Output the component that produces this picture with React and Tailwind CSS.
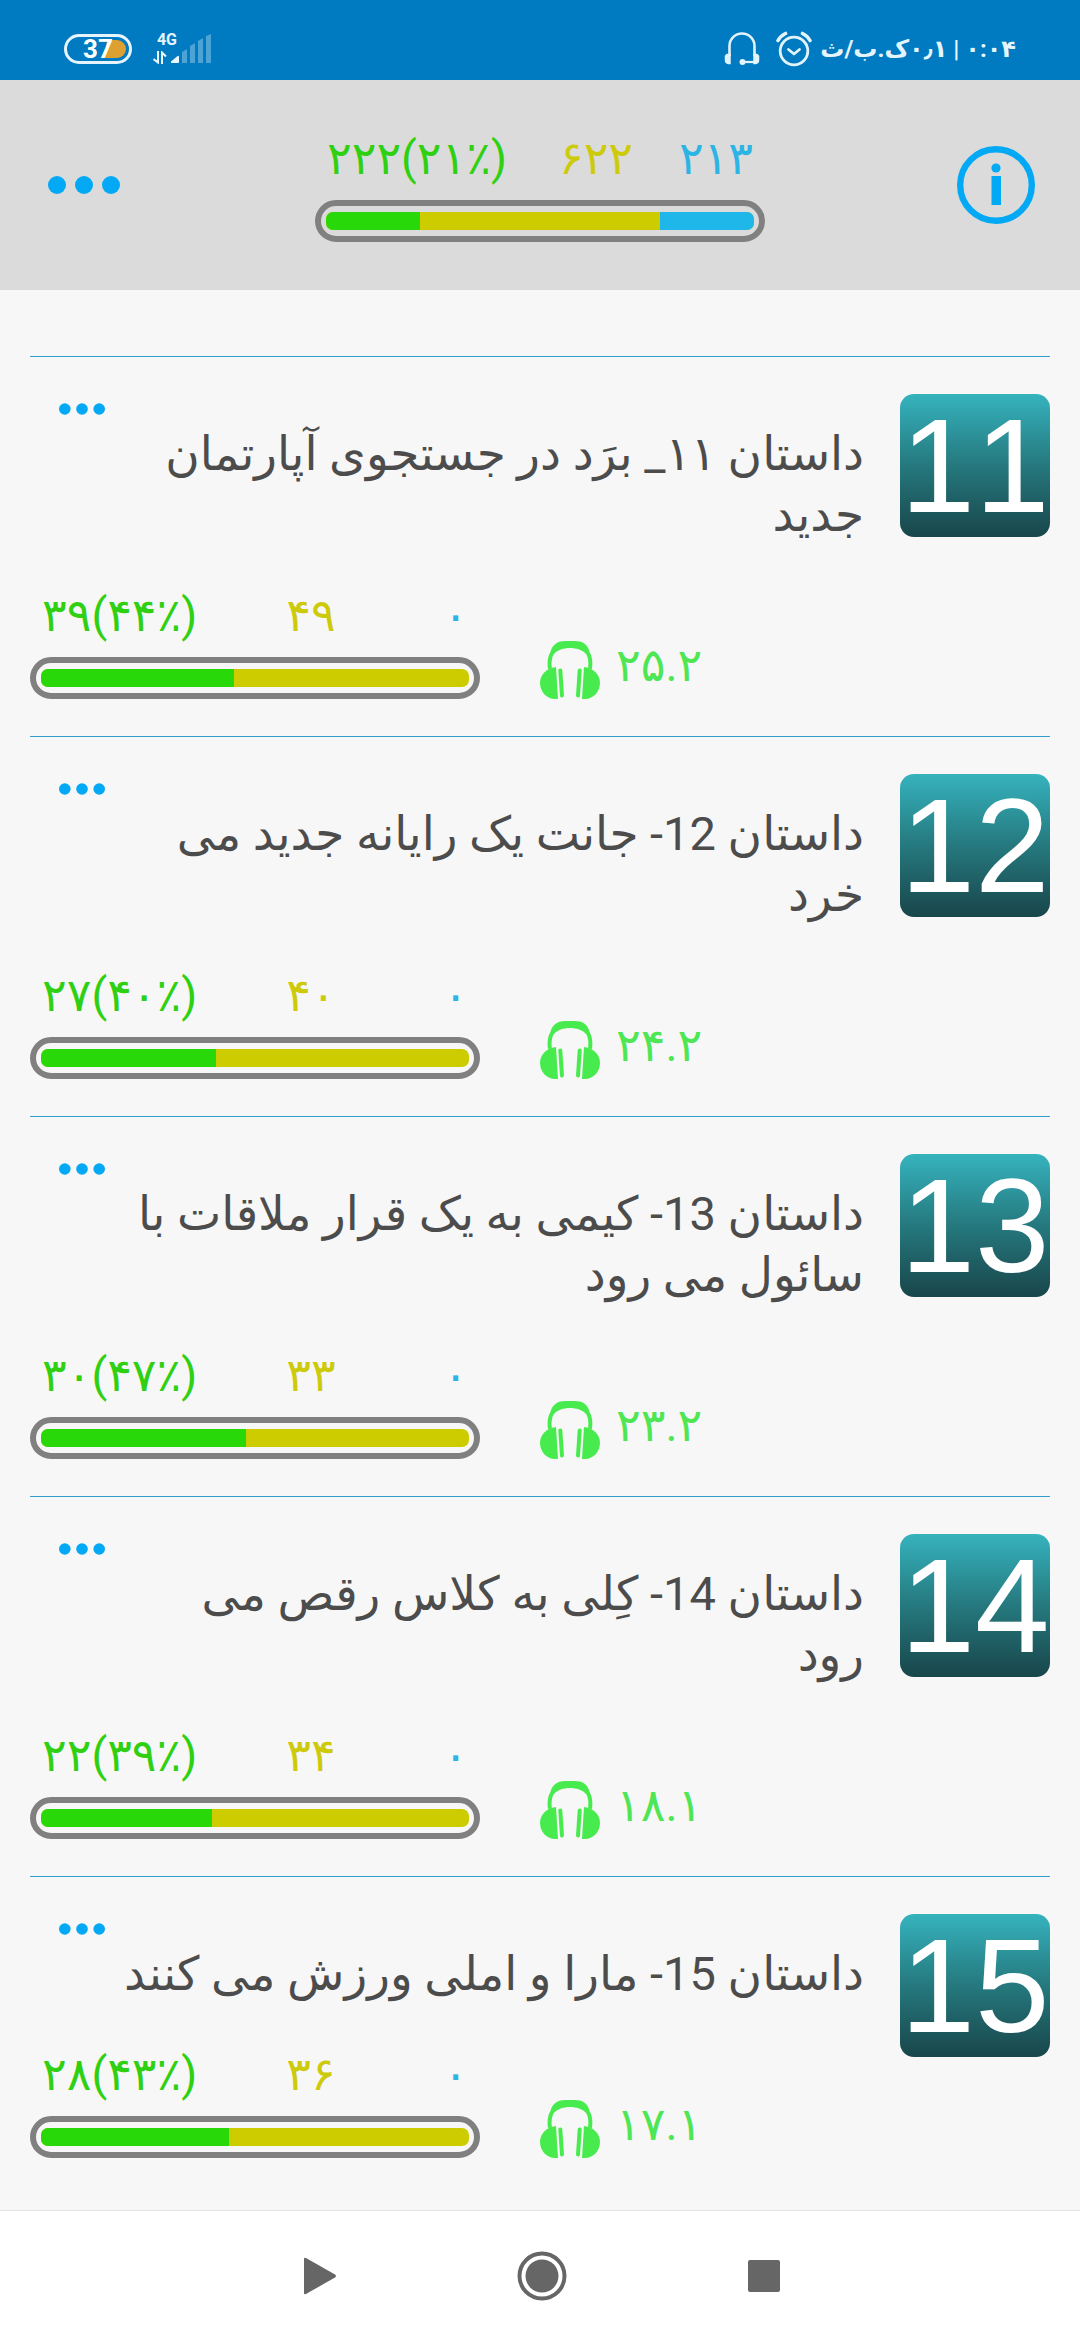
import { useState } from 'react';

const STORIES = [
    { id: 11, title: ['داستان ۱۱_ برَد در جستجوی آپارتمان', 'جدید'], learned: '۳۹(۴۴٪)', learning: '۴۹', left: '۰', percent: 45, audio: '۲۵.۲' },
    { id: 12, title: ['داستان 12- جانت یک رایانه جدید می', 'خرد'], learned: '۲۷(۴۰٪)', learning: '۴۰', left: '۰', percent: 41, audio: '۲۴.۲' },
    { id: 13, title: ['داستان 13- کیمی به یک قرار ملاقات با', 'سائول می رود'], learned: '۳۰(۴۷٪)', learning: '۳۳', left: '۰', percent: 48, audio: '۲۳.۲' },
    { id: 14, title: ['داستان 14- کِلی به کلاس رقص می', 'رود'], learned: '۲۲(۳۹٪)', learning: '۳۴', left: '۰', percent: 40, audio: '۱۸.۱' },
    { id: 15, title: ['داستان 15- مارا و املی ورزش می کنند'], learned: '۲۸(۴۳٪)', learning: '۳۶', left: '۰', percent: 44, audio: '۱۷.۱' },
];

function IconBattery() {
    return (
        <svg width="70" height="32" viewBox="0 0 70 32" className="block">
            <path d="M44 7h10a9 9 0 0 1 0 18H41z" fill="#dda032" />
            <rect x="2.5" y="2.5" width="65" height="27" rx="13.5" fill="none" stroke="#e6f5fd" strokeWidth="3" />
        </svg>
    );
}

function IconSignal() {
    return (
        <svg width="42" height="30" viewBox="0 0 42 30">
            <path d="M2 27.5 8 22.500Q10 21 10 23V28q0 1-1 1H3q-1.500 0-1-1.500z" fill="#eaf7fd" />
            <path d="M13 18l5-3v14h-5zM21 12l5-3v20h-5zM29 7l5-3v25h-5zM37 2l5-2v29h-5z" fill="#4ba3d6" />
        </svg>
    );
}

function IconDataArrows() {
    return (
        <svg width="14" height="13" viewBox="0 0 14 13" fill="none" stroke="#eaf7fd" strokeWidth="2">
            <path d="M5 0v11.500L0.500 8M9 13V1.500l4 4" />
        </svg>
    );
}

function IconHeadset() {
    return (
        <svg width="36" height="34" viewBox="0 0 36 34" fill="none" stroke="#e3f3fc" strokeWidth="2.600">
            <path d="M5.500 24V14a12.500 12.500 0 0 1 25 0v10" />
            <path d="M19 30h12" strokeWidth="2.200" />
            <path d="M3 22.500h3v9H4.500Q1.500 31 1.500 28v-4zM33 22.500h-3v9h1.500Q34.500 31 34.500 28v-4z" fill="#e3f3fc" strokeWidth="1.500" />
            <circle cx="18.500" cy="30" r="3" fill="#e3f3fc" stroke="none" />
        </svg>
    );
}

function IconAlarm() {
    return (
        <svg width="36" height="36" viewBox="0 0 36 36" fill="none" stroke="#e3f3fc" strokeWidth="2.800" strokeLinecap="round" strokeLinejoin="round">
            <circle cx="18" cy="20" r="13.800" />
            <path d="M12.500 18.500l5.500 4.500 5.500-4.500" />
            <path d="M2 9.500Q4.500 5 9.500 2.500M34 9.500Q31.500 5 26.500 2.500" strokeWidth="3.600" />
        </svg>
    );
}

function IconInfo() {
    return (
        <svg width="78" height="78" viewBox="0 0 78 78">
            <circle cx="39" cy="39" r="35.800" fill="none" stroke="#03a9f4" strokeWidth="6.400" />
            <circle cx="39" cy="22" r="4.600" fill="#03a9f4" />
            <rect x="34.500" y="30" width="9.500" height="29" fill="#03a9f4" />
        </svg>
    );
}

function IconHeadphones() {
    return (
        <svg width="60" height="58" viewBox="0 0 60 58" fill="#48eb4e" className="shrink-0">
            <path d="M8 28C7 21 8 15 10.500 11 12 3 19 0 25 0h10c7 0 13 3 14.500 11C52 15 53 21 52 28l-4-.5C49 21 48 17 46.500 13.500 43 9 36 7 30 7S17 9 13.500 13.500C12 17 11 21 12 27.500z" />
            <path d="M16 26C6 27 0 34 0 42c0 9 7 16 15 16h3L16 26z" />
            <path d="M44 26C54 27 60 34 60 42c0 9-7 16-15 16h-3l2-32z" />
            <path d="M20.300 29.500l1.700 25M39.700 29.500l-1.700 25" stroke="#48eb4e" strokeWidth="4" strokeLinecap="round" />
        </svg>
    );
}

function Dots({ large }) {
    return (
        <svg
            width={large ? 72 : 46}
            height={large ? 18 : 12}
            viewBox={large ? '0 0 72 18' : '0 0 46 12'}
            fill="#03a9f4"
            className="block"
        >
            <circle cx={large ? 9 : 5.800} cy={large ? 9 : 6} r={large ? 9 : 5.800} />
            <circle cx={large ? 36 : 23} cy={large ? 9 : 6} r={large ? 9 : 5.800} />
            <circle cx={large ? 63 : 40.200} cy={large ? 9 : 6} r={large ? 9 : 5.800} />
        </svg>
    );
}

function Progress({ learned, learning, left, percent, restPercent = 0 }) {
    return (
        <div className="w-[450px]">
            <div className="grid grid-cols-[211px_116px_1fr] px-3 mb-3 text-[46px] leading-[60px] whitespace-nowrap">
                <span className="text-[#2fd012]">{learned}</span>
                <span className="text-center text-[#cdca0c]">{learning}</span>
                <span className="text-right text-[#2cb4e4]">{left}</span>
            </div>
            <div className="rounded-full border-6 border-[#808080] h-[42px] px-[5px] py-[6px]">
                <div className="flex h-full rounded-[7px] overflow-hidden bg-[#cccc00]">
                    <div className="bg-[#28d808]" style={{ width: `${percent}%` }} />
                    <div className="ml-auto bg-[#1fb6ea]" style={{ width: `${restPercent}%` }} />
                </div>
            </div>
        </div>
    );
}

function StatusBar() {
    return (
        <div className="h-20 bg-[#007ac1] flex items-center justify-between pl-[63px] pr-16 pt-[18px] text-[#e6f5fd]">
            <div className="flex items-center gap-5">
                <div className="relative">
                    <IconBattery />
                    <span className="absolute inset-0 flex items-center justify-center text-[26px] leading-none font-bold text-white">37</span>
                </div>
                <div className="flex items-end">
                    <div className="flex flex-col justify-between w-6 h-[30px]">
                        <span className="self-end text-[16px] leading-[11px] font-bold">4G</span>
                        <IconDataArrows />
                    </div>
                    <div className="-ml-2">
                        <IconSignal />
                    </div>
                </div>
            </div>
            <div className="flex items-center gap-2">
                <div className="flex items-center gap-4">
                    <IconHeadset />
                    <IconAlarm />
                </div>
                <span dir="rtl" className="text-[24px] leading-[36px] font-bold whitespace-nowrap">۰:۰۴ | ۰٫۱ک.ب/ث</span>
            </div>
        </div>
    );
}

function StoryRow({ story, onMenu }) {
    return (
        <li className="flex items-start gap-9 border-t border-[#2f9fd0] pt-[37px] pb-[37px]">
            <div className="flex-1 min-w-0">
                <button onClick={() => onMenu(story.id)} aria-label="منو" className="block ml-[29px] pt-[9px] pb-2 cursor-pointer">
                    <Dots />
                </button>
                <h2 dir="rtl" className="text-[47px] leading-[61px] text-[#4c4c4c] whitespace-nowrap">
                    {story.title.map((line) => (
                        <span key={line} className="block">{line}</span>
                    ))}
                </h2>
                <div className="flex items-end gap-[60px] mt-10">
                    <Progress {...story} />
                    <div className="flex items-end gap-4">
                        <IconHeadphones />
                        <span className="pb-1 text-[46px] leading-[60px] text-[#4ee654]">{story.audio}</span>
                    </div>
                </div>
            </div>
            <div className="flex items-center justify-center w-[150px] h-[143px] rounded-[14px] bg-linear-to-b from-[#36b3be] via-[#25797e] to-[#18464b] font-['Liberation_Sans',sans-serif] text-[134px] leading-[143px] [font-kerning:none] text-white">
                {story.id}
            </div>
        </li>
    );
}

export default function App() {
    const [, setOpenMenu] = useState(null);

    return (
        <div className="min-h-screen flex flex-col bg-[#f7f7f7] font-['Roboto','DejaVu_Sans',sans-serif]">
            <StatusBar />
            <header className="h-[210px] bg-[#dbdbdb] flex items-center justify-between pl-12 pr-[45px]">
                <button onClick={() => setOpenMenu('main')} aria-label="منو" className="w-[75px] cursor-pointer">
                    <Dots large />
                </button>
                <Progress learned="۲۲۲(۲۱٪)" learning="۶۲۲" left="۲۱۳" percent={22} restPercent={22} />
                <button aria-label="اطلاعات" className="cursor-pointer">
                    <IconInfo />
                </button>
            </header>
            <ul className="flex-1 px-[30px] pt-[66px]">
                {STORIES.map((story) => (
                    <StoryRow key={story.id} story={story} onMenu={setOpenMenu} />
                ))}
            </ul>
            <nav className="h-[130px] bg-white border-t border-[#e3e3e3] flex items-center justify-center gap-[181px] pl-1">
                <button aria-label="بازگشت" className="cursor-pointer">
                    <svg width="32" height="38" viewBox="0 0 32 38" fill="#666">
                        <path d="M0 2Q0 0 2 1L31 17.500Q33 19 31 20.500L2 37Q0 38 0 36z" />
                    </svg>
                </button>
                <button aria-label="خانه" className="cursor-pointer">
                    <svg width="50" height="50" viewBox="0 0 50 50" fill="#666">
                        <circle cx="25" cy="25" r="22.500" fill="none" stroke="#666" strokeWidth="4" />
                        <circle cx="25" cy="25" r="16.500" />
                    </svg>
                </button>
                <button aria-label="برنامه‌ها" className="cursor-pointer">
                    <svg width="32" height="32" viewBox="0 0 32 32" fill="#666">
                        <rect width="32" height="32" rx="2" />
                    </svg>
                </button>
            </nav>
        </div>
    );
}
